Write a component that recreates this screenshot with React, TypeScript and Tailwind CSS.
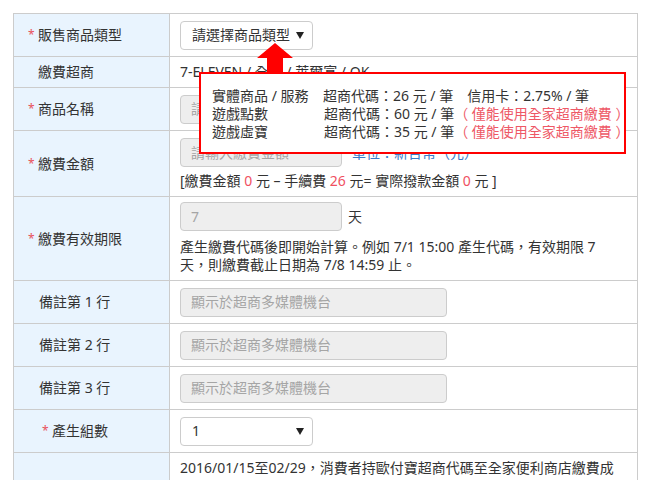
import React from "react";

const font = {
  fontFamily: '"Noto Sans", "Noto Sans CJK TC", sans-serif',
};

function Star() {
  return <span className="inline-block w-[10px] text-[12px] text-[#e8505b]">*</span>;
}

function Label({ children, star, pl }: { children: React.ReactNode; star?: boolean; pl: string }) {
  return (
    <div className={`w-[156px] shrink-0 border-r border-[#cccccc] bg-[#e9f4fe] flex items-center ${pl}`}>
      {star && <Star />}
      <span>{children}</span>
    </div>
  );
}

function Caret({ text, w }: { text: string; w: string }) {
  return (
    <div className={`${w} h-[29px] rounded-[4px] border border-[#cccccc] bg-white flex items-center justify-between pl-[11px] pr-[8px]`}>
      <span>{text}</span>
      <span className="w-0 h-0 border-l-[4px] border-r-[4px] border-t-[7px] border-l-transparent border-r-transparent border-t-[#222222]" />
    </div>
  );
}

function Field({ placeholder, w }: { placeholder: string; w: string }) {
  return (
    <div className={`${w} h-[29px] rounded-[4px] border border-[#cccccc] bg-[#eeeeee] flex items-center pl-[10px] text-[#a5a5a5] overflow-hidden whitespace-nowrap`}>
      {placeholder}
    </div>
  );
}

export default function App() {
  const red = "text-[#f0505f]";
  return (
    <div className="relative w-[650px] h-[480px] overflow-hidden bg-white text-[14px] leading-[18px] text-[#333333]" style={font}>
      <div className="ml-[13px] mt-[13px] w-[625px] border-t border-l border-r border-[#cccccc]">
        {/* 販售商品類型 */}
        <div className="flex h-[43px] border-b border-[#cccccc]">
          <Label star pl="pl-[14px]">販售商品類型</Label>
          <div className="flex items-center pl-[10px]">
            <Caret text="請選擇商品類型" w="w-[133px]" />
          </div>
        </div>
        {/* 繳費超商 */}
        <div className="flex h-[31px] border-b border-[#cccccc]">
          <Label pl="pl-[24px]">繳費超商</Label>
          <div className="flex items-center pl-[10px]">7-ELEVEN / 全家 / 萊爾富 / OK</div>
        </div>
        {/* 商品名稱 */}
        <div className="flex h-[43px] border-b border-[#cccccc]">
          <Label star pl="pl-[14px]">商品名稱</Label>
          <div className="flex items-center pl-[10px]">
            <Field placeholder="請輸入商品名稱" w="w-[267px]" />
          </div>
        </div>
        {/* 繳費金額 */}
        <div className="flex h-[66px] border-b border-[#cccccc]">
          <Label star pl="pl-[14px]">繳費金額</Label>
          <div className="pl-[10px] pt-[7px]">
            <div className="flex items-center">
              <Field placeholder="請輸入繳費金額" w="w-[162px]" />
              <span className="ml-[10px] text-[#3a7bc8]">單位：新台幣（元）</span>
            </div>
            <div className="mt-[5px]">
              [繳費金額 <span className={red}>0</span> 元 – 手續費 <span className={red}>26</span> 元= 實際撥款金額 <span className={red}>0</span> 元 ]
            </div>
          </div>
        </div>
        {/* 繳費有效期限 */}
        <div className="flex h-[84px] border-b border-[#cccccc]">
          <Label star pl="pl-[14px]">繳費有效期限</Label>
          <div className="pl-[10px] pt-[5px]">
            <div className="flex items-center">
              <Field placeholder="7" w="w-[162px]" />
              <span className="ml-[6px]">天</span>
            </div>
            <div className="mt-[7px]">
              產生繳費代碼後即開始計算。例如 7/1 15:00 產生代碼，有效期限 7
              <br />
              天，則繳費截止日期為 7/8 14:59 止。
            </div>
          </div>
        </div>
        {/* 備註 */}
        {["1", "2", "3"].map((n) => (
          <div key={n} className="flex h-[43px] border-b border-[#cccccc]">
            <Label pl="pl-[25px]">備註第 {n} 行</Label>
            <div className="flex items-center pl-[10px]">
              <Field placeholder="顯示於超商多媒體機台" w="w-[267px]" />
            </div>
          </div>
        ))}
        {/* 產生組數 */}
        <div className="flex h-[43px] border-b border-[#cccccc]">
          <Label star pl="pl-[28px]">產生組數</Label>
          <div className="flex items-center pl-[10px]">
            <Caret text="1" w="w-[133px]" />
          </div>
        </div>
        {/* 說明 */}
        <div className="flex h-[60px]">
          <div className="w-[156px] shrink-0 border-r border-[#cccccc] bg-[#e9f4fe]" />
          <div className="pl-[10px] pt-[6px]">
            2016/01/15至02/29，消費者持歐付寶超商代碼至全家便利商店繳費成
          </div>
        </div>
      </div>

      {/* 箭頭 */}
      <svg className="absolute left-[254px] top-[42px]" width="42" height="34" viewBox="0 0 42 34">
        <polygon points="21,1 3,16 13,16 13,33 29,33 29,16 39,16" fill="#ff0000" />
      </svg>

      {/* 手續費提示 */}
      <div className="absolute left-[199px] top-[72px] w-[427px] h-[82px] border-2 border-[#ff0000] bg-white pl-[11px] pt-[13px] whitespace-nowrap">
        <div className="grid grid-cols-[111px_1fr] leading-[18px]">
          <span>實體商品 / 服務</span>
          <span>超商代碼：26 元 / 筆<span className="ml-[14px]">信用卡：2.75% / 筆</span></span>
          <span>遊戲點數</span>
          <span className="pl-[1px]">超商代碼：60 元 / 筆<span className="text-[#ee5866]">（ 僅能使用全家超商繳費 ）</span></span>
          <span>遊戲虛寶</span>
          <span className="pl-[1px]">超商代碼：35 元 / 筆<span className="text-[#ee5866]">（ 僅能使用全家超商繳費 ）</span></span>
        </div>
      </div>
    </div>
  );
}
